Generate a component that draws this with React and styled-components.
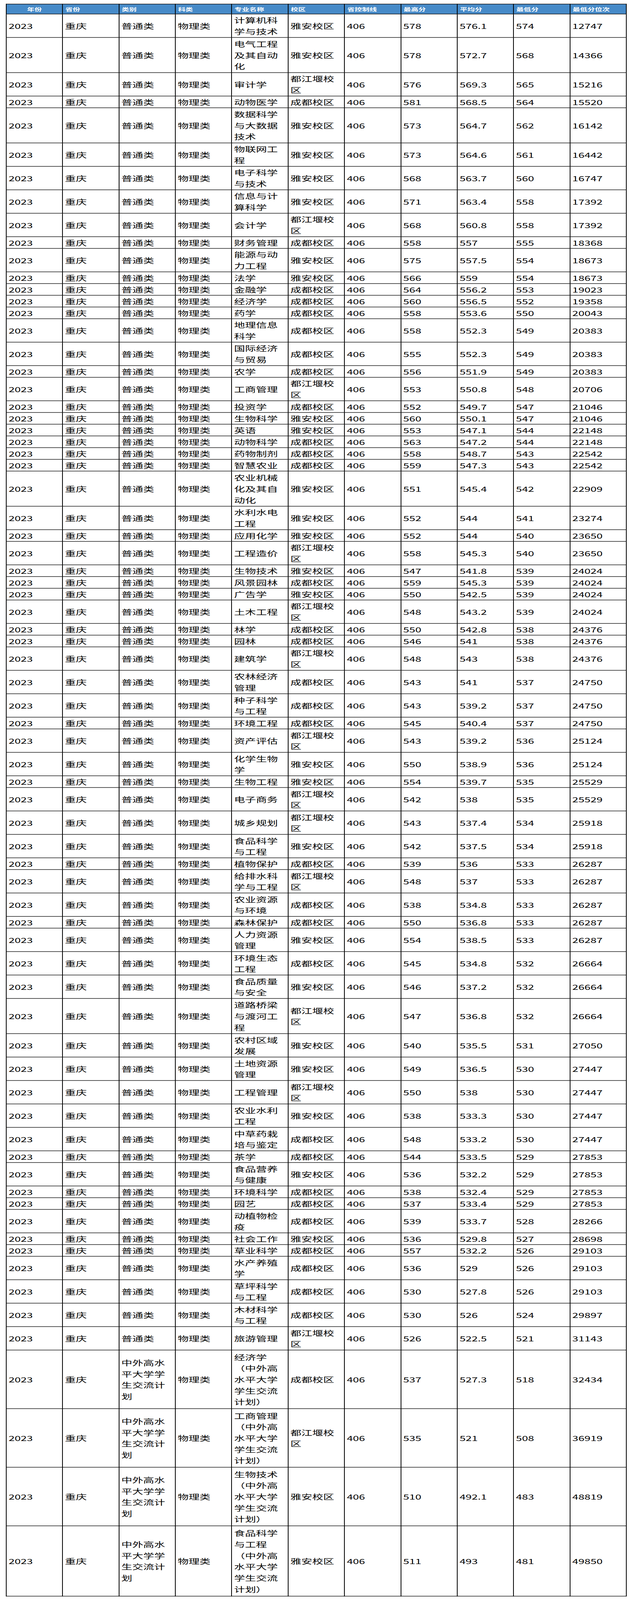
import React, { useLayoutEffect, useState } from 'react'
import styled, { createGlobalStyle } from 'styled-components'

const GlobalStyle = createGlobalStyle`
    html, body {
        margin: 0;
        padding: 0;
        background: #fff;
    }
    body {
        font-family: "Noto Sans CJK SC", "Noto Sans", sans-serif;
        color: #000;
    }
`

// design height of the sheet; the page is squeezed to the window when it is shorter
const SHEET_HEIGHT = 6280

const CAMPUS = { Y: '雅安校区', C: '成都校区', D: '都江堰校区' }
const EXCHANGE = '中外高水平大学学生交流计划'

const HEADERS = ['年份', '省份', '类别', '科类', '专业名称', '校区', '省控制线', '最高分', '平均分', '最低分', '最低分位次']

// 专业 校区 最高分 平均分 最低分 最低分位次 行数 ( * = 中外高水平大学学生交流计划 )
const RAW = `
计算机科学与技术 Y 578 576.1 574 12747 2
电气工程及其自动化 Y 578 572.7 568 14366 3
审计学 D 576 569.3 565 15216 2
动物医学 C 581 568.5 564 15520 1
数据科学与大数据技术 Y 573 564.7 562 16142 3
物联网工程 Y 573 564.6 561 16442 2
电子科学与技术 Y 568 563.7 560 16747 2
信息与计算科学 Y 571 563.4 558 17392 2
会计学 D 568 560.8 558 17392 2
财务管理 C 558 557 555 18368 1
能源与动力工程 Y 575 557.5 554 18673 2
法学 Y 566 559 554 18673 1
金融学 C 564 556.2 553 19023 1
经济学 C 560 556.5 552 19358 1
药学 C 558 553.6 550 20043 1
地理信息科学 C 558 552.3 549 20383 2
国际经济与贸易 C 555 552.3 549 20383 2
农学 C 556 551.9 549 20383 1
工商管理 D 553 550.8 548 20706 2
投资学 C 552 549.7 547 21046 1
生物科学 Y 560 550.1 547 21046 1
英语 Y 553 547.1 544 22148 1
动物科学 C 563 547.2 544 22148 1
药物制剂 C 558 548.7 543 22542 1
智慧农业 C 559 547.3 543 22542 1
农业机械化及其自动化 Y 551 545.4 542 22909 3
水利水电工程 Y 552 544 541 23274 2
应用化学 Y 552 544 540 23650 1
工程造价 D 558 545.3 540 23650 2
生物技术 Y 547 541.8 539 24024 1
风景园林 C 559 545.3 539 24024 1
广告学 Y 550 542.5 539 24024 1
土木工程 D 548 543.2 539 24024 2
林学 C 550 542.8 538 24376 1
园林 C 546 541 538 24376 1
建筑学 D 548 543 538 24376 2
农林经济管理 C 543 541 537 24750 2
种子科学与工程 C 543 539.2 537 24750 2
环境工程 C 545 540.4 537 24750 1
资产评估 D 543 539.2 536 25124 2
化学生物学 Y 550 538.9 536 25124 2
生物工程 Y 554 539.7 535 25529 1
电子商务 D 542 538 535 25529 2
城乡规划 D 543 537.4 534 25918 2
食品科学与工程 Y 542 537.5 534 25918 2
植物保护 C 539 536 533 26287 1
给排水科学与工程 D 548 537 533 26287 2
农业资源与环境 C 538 534.8 533 26287 2
森林保护 C 550 536.8 533 26287 1
人力资源管理 Y 554 538.5 533 26287 2
环境生态工程 C 545 534.8 532 26664 2
食品质量与安全 Y 546 537.2 532 26664 2
道路桥梁与渡河工程 D 547 536.8 532 26664 3
农村区域发展 Y 540 535.5 531 27050 2
土地资源管理 Y 549 536.5 530 27447 2
工程管理 D 550 538 530 27447 2
农业水利工程 Y 538 533.3 530 27447 2
中草药栽培与鉴定 C 548 533.2 530 27447 2
茶学 C 544 533.5 529 27853 1
食品营养与健康 Y 536 532.2 529 27853 2
环境科学 C 538 532.4 529 27853 1
园艺 C 537 533.4 529 27853 1
动植物检疫 C 539 533.7 528 28266 2
社会工作 Y 536 529.8 527 28698 1
草业科学 C 557 532.2 526 29103 1
水产养殖学 C 536 529 526 29103 2
草坪科学与工程 C 530 527.8 526 29103 2
木材科学与工程 C 530 526 524 29897 2
旅游管理 D 526 522.5 521 31143 2
经济学* C 537 527.3 518 32434 5
工商管理* D 535 521 508 36919 5
生物技术* Y 510 492.1 483 48819 5
食品科学与工程* Y 511 493 481 49850 6
`

const rows = RAW.trim().split('\n').map((line) => {
    const [name, campus, max, avg, min, rank, lines] = line.trim().split(' ')
    const exchange = name.endsWith('*')
    return {
        name: exchange ? name.slice(0, -1) + '（' + EXCHANGE + '）' : name,
        category: exchange ? EXCHANGE : '普通类',
        campus: CAMPUS[campus],
        max, avg, min, rank,
        lines: Number(lines),
    }
})

function useFit() {
    const [fit, setFit] = useState(1)
    useLayoutEffect(() => {
        const update = () => setFit(Math.min(1, window.innerHeight / SHEET_HEIGHT))
        update()
        window.addEventListener('resize', update)
        return () => window.removeEventListener('resize', update)
    }, [])
    return fit
}

function App() {
    const fit = useFit()

    return (
        <Frame style={{ height: SHEET_HEIGHT * fit }}>
            <GlobalStyle />
            <Page style={{ transform: `scaleY(${fit})` }}>
                <ScoreTable>
                    <thead>
                        <HeadRow>
                            {HEADERS.map((h, i) => (
                                <HeadCell key={h} $center={i === 0}>{h}</HeadCell>
                            ))}
                        </HeadRow>
                    </thead>
                    <tbody>
                        {rows.map((r, index) => (
                            <BodyRow key={index} $lines={r.lines}>
                                <Cell>2023</Cell>
                                <Cell>重庆</Cell>
                                <Cell>{r.category}</Cell>
                                <Cell>物理类</Cell>
                                <Cell>{r.name}</Cell>
                                <Cell>{r.campus}</Cell>
                                <Cell>406</Cell>
                                <Cell>{r.max}</Cell>
                                <Cell>{r.avg}</Cell>
                                <Cell>{r.min}</Cell>
                                <Cell>{r.rank}</Cell>
                            </BodyRow>
                        ))}
                    </tbody>
                </ScoreTable>
            </Page>
        </Frame>
    )
}

export default App

const Frame = styled.div`
    width: 1616px;
    overflow: hidden;
`

const Page = styled.div`
    padding: 15px 11px 0 15px;
    transform-origin: top left;
`

const ScoreTable = styled.table`
    width: 1590px;
    table-layout: fixed;
    border-collapse: collapse;
    font-size: 28px;
    line-height: 44px;
`

const HeadRow = styled.tr`
    height: 39px;
`

const HeadCell = styled.th`
    box-sizing: border-box;
    height: 39px;
    padding: 0 6px;
    border: 2px solid #000;
    background: #468ac8;
    color: #fff;
    font-size: 19px;
    font-weight: 700;
    line-height: 24px;
    text-align: ${(p) => (p.$center ? 'center' : 'left')};
    vertical-align: middle;
    white-space: nowrap;
`

const BodyRow = styled.tr`
    height: ${(p) => p.$lines * 46}px;
`

const Cell = styled.td`
    box-sizing: border-box;
    padding: 0 5px;
    border: 2px solid #000;
    text-align: left;
    vertical-align: middle;
`
